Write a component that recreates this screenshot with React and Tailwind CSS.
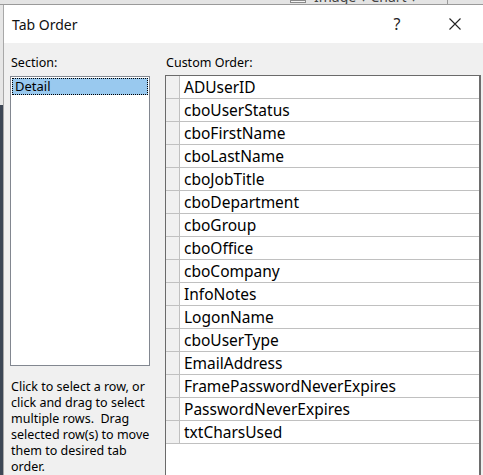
import React from "react";

const rows = [
  "ADUserID",
  "cboUserStatus",
  "cboFirstName",
  "cboLastName",
  "cboJobTitle",
  "cboDepartment",
  "cboGroup",
  "cboOffice",
  "cboCompany",
  "InfoNotes",
  "LogonName",
  "cboUserType",
  "EmailAddress",
  "FramePasswordNeverExpires",
  "PasswordNeverExpires",
  "txtCharsUsed",
];

const font = { fontFamily: '"Segoe UI", "Noto Sans", "Open Sans", sans-serif' };

export default function App() {
  return (
    <div
      className="w-[483px] h-[475px] overflow-hidden flex flex-col bg-[#d6d6d6] text-black"
      style={font}
    >
      {/* background app strip */}
      <div className="h-[5px] overflow-hidden flex bg-[#e4e4e4] border-b border-[#9a9a9a]">
        <div className="w-[290px]" />
        <div className="w-[16px] h-[3px] border border-[#8a8a8a] bg-[#f4f4f4]" />
        <div className="ml-[8px] -mt-[11px] text-[14px] leading-[16px] text-[#444] whitespace-nowrap">
          Image ▾ Chart ▾
        </div>
        <div className="ml-[30px] w-[1px] bg-[#999]" />
      </div>
      <div className="flex flex-1 min-h-0">
        <div className="w-[3px] flex flex-col">
          <div className="h-[100px] bg-[#e6e6e6]" />
          <div className="flex-1 bg-[#3d4756]" />
        </div>
        <div className="flex-1 flex flex-col border-l border-[#a8a8a8] min-w-0">
          {/* title bar */}
          <div className="h-[38px] bg-white flex items-center shrink-0">
            <div className="pl-[8px] text-[14px] text-[#111] flex-1">Tab Order</div>
            <div className="w-[20px] text-center text-[16px] text-[#222] mr-[38px]">?</div>
            <div className="w-[20px] flex items-center justify-center mr-[18px]">
              <svg width="14" height="14" viewBox="0 0 14 14">
                <path d="M1.5 1.5 L12.5 12.5 M12.5 1.5 L1.5 12.5" stroke="#222" strokeWidth="1.1" />
              </svg>
            </div>
          </div>
          {/* body */}
          <div className="flex-1 bg-[#f0f0f0] flex pt-[12px] pl-[6px] min-h-0">
            <div className="w-[140px] flex flex-col shrink-0">
              <div className="text-[12.5px] leading-[16px] pl-[1px] mb-[5px]">Section:</div>
              <div className="h-[291px] bg-white border border-[#828790] p-[1px]">
                <div className="h-[17px] bg-[#99c9ef] border border-dotted border-black text-[13px] leading-[15px] pl-[2px]">
                  Detail
                </div>
              </div>
              <div className="mt-[13px] text-[12.5px] leading-[16px] pl-[1px] w-[142px]">
                Click to select a row, or click and drag to select multiple rows.&nbsp; Drag selected row(s) to move them to desired tab order.
              </div>
            </div>
            <div className="ml-[15px] w-[316px] flex flex-col shrink-0">
              <div className="text-[12.5px] leading-[16px] pl-[1px] mb-[4px]">Custom Order:</div>
              <div className="flex-1 bg-white border-l border-t border-r-2 border-[#6a6a6a] border-r-[#6d6d6d]">
                {rows.map((r) => (
                  <div key={r} className="flex h-[23px] border-b border-[#c0c0c0]">
                    <div className="w-[14px] bg-[#f0f0f0] border-r border-[#c0c0c0] shrink-0" />
                    <div className="pl-[4px] pt-[1px] text-[15.5px] leading-[21px] whitespace-nowrap">{r}</div>
                  </div>
                ))}
              </div>
            </div>
          </div>
        </div>
      </div>
    </div>
  );
}
